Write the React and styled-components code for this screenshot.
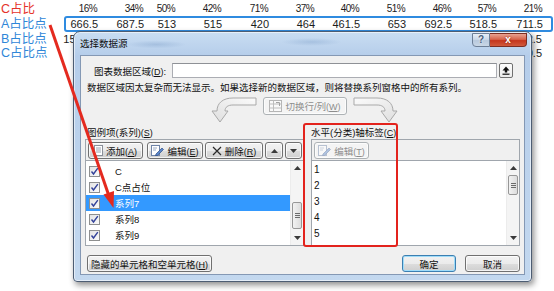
import React from "react";
import styled, { createGlobalStyle } from "styled-components";

const CJK = `"Liberation Sans", "Noto Sans CJK SC", "Noto Sans", sans-serif`;

const Global = createGlobalStyle`
  html, body { margin: 0; padding: 0; background: #fff; }
  body { width: 554px; height: 291px; overflow: hidden; font-family: ${CJK}; }
`;

const Page = styled.div`
  position: relative;
  width: 554px;
  height: 291px;
  overflow: hidden;
  background: #fff;
`;

/* ---------- spreadsheet behind the dialog ---------- */

const COLS = "46px 46px 32px 46px 47px 46px 45px 46px 46px 45px 46px";

const Sheet = styled.div`
  display: flex;
  flex-direction: column;
  padding-top: 1px;
  font-family: "Liberation Sans", Arial, sans-serif;
  font-size: 11px;
  color: #1c1c1c;
`;

const Row = styled.div`
  display: grid;
  grid-template-columns: 51px ${COLS};
  height: ${(p) => p.$h || 14}px;
  align-items: center;
`;

const BoxedRow = styled.div`
  display: flex;
  align-items: center;
  height: 16px;
`;

const RowLabel = styled.div`
  font-family: ${CJK};
  font-size: 12.5px;
  line-height: 14px;
  color: ${(p) => (p.$red ? "#e5322b" : "#2f86d8")};
  white-space: nowrap;
  padding-left: 1px;
  width: ${(p) => (p.$w ? `${p.$w}px` : "auto")};
  flex-shrink: 0;
`;

const HighlightBox = styled.div`
  display: grid;
  grid-template-columns: 32px ${COLS.replace(/^46px /, "")};
  align-items: center;
  box-sizing: border-box;
  width: 489px;
  height: 16px;
  border: 2px solid #2f8be0;
  border-radius: 3px;
`;

const Cell = styled.div`
  text-align: right;
  white-space: nowrap;
  font-size: ${(p) => (p.$pct ? "10px" : "11px")};
  letter-spacing: ${(p) => (p.$pct ? "-0.6px" : "0")};
`;

/* ---------- dialog window ---------- */

const Dialog = styled.div`
  position: absolute;
  left: 73px;
  top: 31px;
  width: 459px;
  height: 251px;
  box-sizing: border-box;
  display: flex;
  flex-direction: column;
  padding: 0 6px 6px 6px;
  border: 1px solid #4d5d73;
  border-radius: 7px 7px 4px 4px;
  background:
    radial-gradient(ellipse 26px 5px at 9% 16%, rgba(70, 110, 165, 0.35), transparent),
    radial-gradient(ellipse 30px 5px at 27% 14%, rgba(70, 110, 165, 0.3), transparent),
    radial-gradient(ellipse 22px 5px at 44% 16%, rgba(70, 110, 165, 0.3), transparent),
    radial-gradient(ellipse 30px 5px at 61% 14%, rgba(70, 110, 165, 0.3), transparent),
    radial-gradient(ellipse 26px 5px at 78% 15%, rgba(70, 110, 165, 0.25), transparent),
    radial-gradient(ellipse 30px 4px at 18% 5%, rgba(90, 130, 180, 0.25), transparent),
    radial-gradient(ellipse 30px 4px at 52% 4%, rgba(90, 130, 180, 0.25), transparent),
    linear-gradient(180deg, #c9ddf2 0, #b5cdea 24px, #c3d8ef 100%);
  box-shadow: 2px 3px 6px rgba(0, 0, 0, 0.45), inset 0 0 0 1px rgba(255, 255, 255, 0.55);
  font-family: ${CJK};
  font-size: 9.5px;
  color: #111;
`;

const TitleBar = styled.div`
  display: flex;
  align-items: flex-start;
  height: 23px;
  flex-shrink: 0;
`;

const Title = styled.div`
  flex: 1;
  line-height: 23px;
  font-size: 9.5px;
  color: #0c0c0c;
`;

const CaptionButton = styled.div`
  width: ${(p) => p.$w}px;
  height: 14px;
  box-sizing: border-box;
  margin-top: 1px;
  display: flex;
  align-items: center;
  justify-content: center;
  border: 1px solid ${(p) => (p.$close ? "#7c2d22" : "#6d7f97")};
  border-left-width: ${(p) => (p.$close ? 0 : 1)}px;
  border-radius: ${(p) => (p.$close ? "0 0 4px 0" : "0 0 0 4px")};
  background: ${(p) =>
    p.$close
      ? "linear-gradient(180deg, #e8a291 0, #d6644c 45%, #c5361d 55%, #d15a3c 100%)"
      : "linear-gradient(180deg, #e6eef7 0, #cbd8e8 45%, #b8c9dd 55%, #c9d7e6 100%)"};
  color: ${(p) => (p.$close ? "#fff" : "#4b5f7c")};
  font-family: "Liberation Sans", Arial, sans-serif;
  font-weight: bold;
  font-size: 10px;
  line-height: 12px;
  margin-right: ${(p) => (p.$close ? -2 : 0)}px;
  text-shadow: ${(p) => (p.$close ? "0 0 2px #7a1a0a" : "0 0 2px #fff")};
`;

const Client = styled.div`
  flex: 1;
  display: flex;
  flex-direction: column;
  padding: 0 4px;
  background: #f0f0f0;
  border: 1px solid #8498b4;
`;

// access-key suffix like "(A)", kept in a Latin face so the brackets stay narrow
const Key = styled.span`
  font-family: "Liberation Sans", Arial, sans-serif;
  font-size: 9px;
  & u { text-underline-offset: 1px; }
`;

const RangeRow = styled.div`
  display: flex;
  align-items: center;
  height: 15px;
  margin-top: 7px;
  padding: 0 7px 0 9px;
`;

const FieldLabel = styled.div`
  width: 78px;
  flex-shrink: 0;
  white-space: nowrap;
`;

const TextInput = styled.div`
  flex: 1;
  height: 15px;
  box-sizing: border-box;
  background: #fff;
  border: 1px solid #abadb3;
  border-top-color: #8e9196;
`;

const CollapseButton = styled.div`
  width: 14px;
  height: 15px;
  margin-left: 2px;
  box-sizing: border-box;
  display: flex;
  align-items: center;
  justify-content: center;
  border: 1px solid #707070;
  border-radius: 2px;
  background: linear-gradient(180deg, #fdfdfd, #ececec);
`;

const Message = styled.div`
  margin: 4px 0 0 2px;
  line-height: 12px;
  white-space: nowrap;
`;

const SwapRow = styled.div`
  display: flex;
  align-items: flex-start;
  gap: 6px;
  height: 26px;
  margin-top: 3px;
  padding-left: 110px;
`;

const Button = styled.div`
  height: ${(p) => p.$h || 17}px;
  width: ${(p) => (p.$w ? `${p.$w}px` : "auto")};
  box-sizing: border-box;
  flex-shrink: 0;
  display: flex;
  align-items: center;
  justify-content: center;
  gap: 3px;
  white-space: nowrap;
  border: 1px solid ${(p) => (p.$disabled ? "#adb2b5" : p.$default ? "#3c7fb1" : "#707070")};
  border-radius: 3px;
  background: ${(p) =>
    p.$disabled
      ? "#f4f4f4"
      : "linear-gradient(180deg, #f2f2f2 0%, #ebebeb 50%, #dddddd 51%, #cfcfcf 100%)"};
  box-shadow: inset 0 0 0 1px ${(p) => (p.$default ? "#9fdcf9" : "rgba(255,255,255,0.75)")};
  color: ${(p) => (p.$disabled ? "#8d8d8d" : "#111")};
  margin-left: ${(p) => p.$ml || 0}px;
`;

const Panes = styled.div`
  display: grid;
  grid-template-columns: 219px 209px;
  column-gap: 7px;
  margin-top: 3px;
`;

const Pane = styled.div`
  display: flex;
  flex-direction: column;
`;

const PaneCaption = styled.div`
  height: 13px;
  line-height: 13px;
  padding-left: ${(p) => p.$pl || 0}px;
  white-space: nowrap;
`;

const PaneBox = styled.div`
  border: 1px solid #a0a6ad;
  display: flex;
  flex-direction: column;
`;

const Toolbar = styled.div`
  display: flex;
  align-items: flex-start;
  height: 20px;
  box-sizing: border-box;
  padding: 2px 0 0 2px;
  gap: 2px;
  background: #f0f0f0;
`;

const ListArea = styled.div`
  display: flex;
  height: 84px;
  background: #fff;
  border-top: 1px solid #a0a6ad;
`;

const Items = styled.div`
  flex: 1;
  display: flex;
  flex-direction: column;
  padding-top: ${(p) => p.$pt || 0}px;
`;

const Item = styled.div`
  display: flex;
  align-items: center;
  height: 16px;
  flex-shrink: 0;
  padding-left: ${(p) => p.$pl || 3}px;
  background: ${(p) => (p.$selected ? "#3399ff" : "transparent")};
  color: ${(p) => (p.$selected ? "#fff" : "#111")};
  font-size: ${(p) => (p.$num ? "10px" : "9.5px")};
`;

const CheckBox = styled.div`
  width: 11px;
  height: 11px;
  box-sizing: border-box;
  margin-right: 15px;
  border: 1px solid #8e8f8f;
  background: linear-gradient(135deg, #e4e4e4, #fafafa);
  display: flex;
  align-items: center;
  justify-content: center;
`;

const ScrollBar = styled.div`
  width: 12px;
  display: flex;
  flex-direction: column;
  background: #f4f4f4;
  border-left: 1px solid #ececec;
`;

const ScrollArrow = styled.div`
  height: 14px;
  display: flex;
  align-items: center;
  justify-content: center;
  flex-shrink: 0;
`;

const Track = styled.div`
  flex: 1;
  display: flex;
  flex-direction: column;
`;

const Thumb = styled.div`
  margin: ${(p) => p.$top}px 1px 0 1px;
  height: ${(p) => p.$h}px;
  box-sizing: border-box;
  border: 1px solid #979797;
  border-radius: 2px;
  background: linear-gradient(90deg, #f2f2f2, #dcdcdc);
  display: flex;
  align-items: center;
  justify-content: center;
`;

const BottomRow = styled.div`
  display: flex;
  align-items: center;
  margin-top: 9px;
  padding-left: 2px;
`;

const RightButtons = styled.div`
  display: flex;
  gap: 9px;
  margin-left: auto;
`;

/* ---------- annotations over the screenshot ---------- */

const RedFrame = styled.div`
  position: absolute;
  left: 303px;
  top: 123px;
  width: 95px;
  height: 124px;
  box-sizing: border-box;
  border: 2px solid #e3231d;
  border-radius: 3px;
  pointer-events: none;
`;

const Overlay = styled.svg`
  position: absolute;
  left: 0;
  top: 0;
  pointer-events: none;
`;

/* ---------- small drawings ---------- */

const Tri = ({ up }) => (
  <svg width="7" height="4" viewBox="0 0 7 4">
    <path d={up ? "M0 4 L3.5 0 L7 4 Z" : "M0 0 L3.5 4 L7 0 Z"} fill="#3a3a3a" />
  </svg>
);

const Grip = () => (
  <svg width="5" height="5" viewBox="0 0 5 5">
    <path d="M0 0.5 H5 M0 2.5 H5 M0 4.5 H5" stroke="#6b6b6b" strokeWidth="1" />
  </svg>
);

const Check = () => (
  <svg width="9" height="9" viewBox="0 0 9 9">
    <path d="M1.5 4.5 L3.5 7 L7.8 1.2" stroke="#34439a" strokeWidth="1.4" fill="none" />
  </svg>
);

const AddIcon = () => (
  <svg width="9" height="11" viewBox="0 0 9 11">
    <rect x="0.5" y="0.5" width="8" height="10" fill="#fff" stroke="#8a8f99" />
    <path d="M2 3 H7 M2 5 H7 M2 7 H7" stroke="#9aa3b0" />
  </svg>
);

const EditIcon = ({ faded }) => (
  <svg width="13" height="11" viewBox="0 0 13 11" opacity={faded ? 0.45 : 1}>
    <rect x="0.5" y="0.5" width="8" height="10" fill="#fff" stroke="#6f84a8" />
    <path d="M2 3 H6 M2 5 H5" stroke="#9aa9c3" />
    <path d="M5 9 L11 3 L12.5 4.5 L6.5 10.5 L4.5 10.5 Z" fill="#5b86c9" stroke="#2f4f86" strokeWidth="0.7" />
  </svg>
);

const DeleteIcon = () => (
  <svg width="10" height="10" viewBox="0 0 10 10">
    <path d="M1 1 L9 9 M9 1 L1 9" stroke="#2a2a2a" strokeWidth="1.2" />
  </svg>
);

const SwapIcon = () => (
  <svg width="13" height="12" viewBox="0 0 13 12" opacity="0.5">
    <rect x="0.5" y="0.5" width="12" height="11" fill="#fff" stroke="#777" />
    <path d="M0.5 4 H12.5 M0.5 8 H12.5 M4.5 0.5 V11.5" stroke="#888" />
    <path d="M7 2.5 H10.5 V6" stroke="#555" fill="none" />
  </svg>
);

const CollapseIcon = () => (
  <svg width="8" height="9" viewBox="0 0 8 9">
    <path d="M4 0.5 L7.5 4.5 H5.2 V6.5 H2.8 V4.5 H0.5 Z" fill="#111" />
    <path d="M0.5 8.2 H7.5" stroke="#111" strokeWidth="1.2" />
  </svg>
);

const LeftCurve = () => (
  <svg width="62" height="26" viewBox="0 0 62 26">
    <defs>
      <linearGradient id="lc" x1="1" x2="0" y1="0" y2="1">
        <stop offset="0" stopColor="#fbfbfb" />
        <stop offset="1" stopColor="#dedede" />
      </linearGradient>
    </defs>
    <path
      d="M61 1 L38 1 C28 1 22 6 22 14 L17 14 L25 25 L33 14 L30 14 C30 10 33 8 38 8 L61 8 Z"
      fill="url(#lc)"
      stroke="#a9a9a9"
    />
  </svg>
);

const RightCurve = () => (
  <svg width="46" height="26" viewBox="0 0 46 26">
    <defs>
      <linearGradient id="rc" x1="0" x2="1" y1="0" y2="1">
        <stop offset="0" stopColor="#fbfbfb" />
        <stop offset="1" stopColor="#dedede" />
      </linearGradient>
    </defs>
    <path
      d="M1 1 L24 1 C34 1 40 6 40 14 L44 14 L36 25 L28 14 L32 14 C32 10 29 8 24 8 L1 8 Z"
      fill="url(#rc)"
      stroke="#a9a9a9"
    />
  </svg>
);

/* ---------- data ---------- */

const pct = ["16%", "34%", "50%", "42%", "71%", "37%", "40%", "51%", "46%", "57%", "21%"];
const vals = ["666.5", "687.5", "513", "515", "420", "464", "461.5", "653", "692.5", "518.5", "711.5"];
const rowB = ["1569.5", "1420", "1185", "1296", "1080", "1244", "1187.5", "1306", "1454.5", "1210", "1322.5"];
const rowC = ["24.5", "316", "298", "301", "254", "306", "289", "372", "344.5", "310", "540.5"];

const series = [
  { name: "C" },
  { name: "C点占位" },
  { name: "系列7", selected: true },
  { name: "系列8" },
  { name: "系列9" },
];

const K = ({ k }) => (
  <Key>
    (<u>{k}</u>)
  </Key>
);

function Bar({ top, h }) {
  return (
    <ScrollBar>
      <ScrollArrow><Tri up /></ScrollArrow>
      <Track>
        <Thumb $top={top} $h={h}><Grip /></Thumb>
      </Track>
      <ScrollArrow><Tri /></ScrollArrow>
    </ScrollBar>
  );
}

export default function App() {
  return (
    <Page>
      <Global />
      <Sheet>
        <Row $h={15}>
          <RowLabel $red>C占比</RowLabel>
          {pct.map((v, i) => <Cell key={i} $pct>{v}</Cell>)}
        </Row>
        <BoxedRow>
          <RowLabel $w={63}>A占比点</RowLabel>
          <HighlightBox>
            {vals.map((v, i) => <Cell key={i}>{v}</Cell>)}
          </HighlightBox>
        </BoxedRow>
        <Row>
          <RowLabel>B占比点</RowLabel>
          {rowB.map((v, i) => <Cell key={i}>{v}</Cell>)}
        </Row>
        <Row>
          <RowLabel>C占比点</RowLabel>
          {rowC.map((v, i) => <Cell key={i}>{v}</Cell>)}
        </Row>
      </Sheet>

      <Dialog>
        <TitleBar>
          <Title>选择数据源</Title>
          <CaptionButton $w={18}>?</CaptionButton>
          <CaptionButton $w={37} $close>x</CaptionButton>
        </TitleBar>
        <Client>
          <RangeRow>
            <FieldLabel>图表数据区域<K k="D" />:</FieldLabel>
            <TextInput />
            <CollapseButton><CollapseIcon /></CollapseButton>
          </RangeRow>
          <Message>数据区域因太复杂而无法显示。如果选择新的数据区域，则将替换系列窗格中的所有系列。</Message>
          <SwapRow>
            <LeftCurve />
            <Button $disabled $w={84} $h={18}>
              <SwapIcon />
              <span>切换行/列<K k="W" /></span>
            </Button>
            <RightCurve />
          </SwapRow>
          <Panes>
            <Pane>
              <PaneCaption $pl={2}>图例项(系列)<K k="S" /></PaneCaption>
              <PaneBox>
                <Toolbar>
                  <Button $w={55}><AddIcon /><span>添加<K k="A" /></span></Button>
                  <Button $w={56} $ml={2}><EditIcon /><span>编辑<K k="E" /></span></Button>
                  <Button $w={58}><DeleteIcon /><span>删除<K k="R" /></span></Button>
                  <Button $w={18}><Tri up /></Button>
                  <Button $w={17}><Tri /></Button>
                </Toolbar>
                <ListArea>
                  <Items $pt={2}>
                    {series.map((s) => (
                      <Item key={s.name} $selected={s.selected}>
                        <CheckBox><Check /></CheckBox>
                        {s.name}
                      </Item>
                    ))}
                  </Items>
                  <Bar top={27} h={27} />
                </ListArea>
              </PaneBox>
            </Pane>
            <Pane>
              <PaneCaption>水平(分类)轴标签<K k="C" /></PaneCaption>
              <PaneBox>
                <Toolbar>
                  <Button $w={55} $disabled><EditIcon faded /><span>编辑<K k="T" /></span></Button>
                </Toolbar>
                <ListArea>
                  <Items>
                    {["1", "2", "3", "4", "5"].map((n) => (
                      <Item key={n} $num $pl={2}>{n}</Item>
                    ))}
                  </Items>
                  <Bar top={0} h={20} />
                </ListArea>
              </PaneBox>
            </Pane>
          </Panes>
          <BottomRow>
            <Button $w={125}><span>隐藏的单元格和空单元格<K k="H" /></span></Button>
            <RightButtons>
              <Button $w={54} $default>确定</Button>
              <Button $w={55}>取消</Button>
            </RightButtons>
          </BottomRow>
        </Client>
      </Dialog>

      <RedFrame />
      <Overlay width="554" height="291" viewBox="0 0 554 291">
        <line x1="50" y1="25" x2="109" y2="196" stroke="#e42a1f" strokeWidth="3" />
        <path d="M113.5 208 L103.5 194.5 L114 191 Z" fill="#e42a1f" />
      </Overlay>
    </Page>
  );
}
